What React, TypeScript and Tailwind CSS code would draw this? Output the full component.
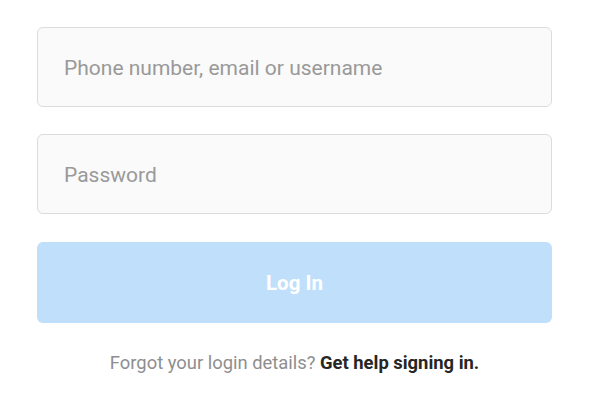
export default function App() {
  return (
    <div className="w-[600px] h-[400px] bg-white overflow-hidden" style={{ fontFamily: 'Roboto, "Liberation Sans", sans-serif' }}>
      <div className="ml-[37px] w-[515px] pt-[27px] flex flex-col">
        <div className="h-[80px] rounded-[6px] border border-[#dcdcdc] bg-[#fafafa] flex items-center pl-[26px] pt-[3px]">
          <span className="text-[21px] text-[#999999]">Phone number, email or username</span>
        </div>
        <div className="mt-[27px] h-[80px] rounded-[6px] border border-[#dcdcdc] bg-[#fafafa] flex items-center pl-[26px] pt-[3px]">
          <span className="text-[21px] text-[#999999]">Password</span>
        </div>
        <button className="mt-[28px] h-[81px] rounded-[6px] bg-[#c0dffb] text-white text-[20.5px] font-bold flex items-center justify-center pt-[2px]">
          Log In
        </button>
        <p className="mt-[26px] text-center text-[18.4px] text-[#8e8e8e]">
          Forgot your login details? <span className="font-bold text-[#262626]">Get help signing in.</span>
        </p>
      </div>
    </div>
  );
}
